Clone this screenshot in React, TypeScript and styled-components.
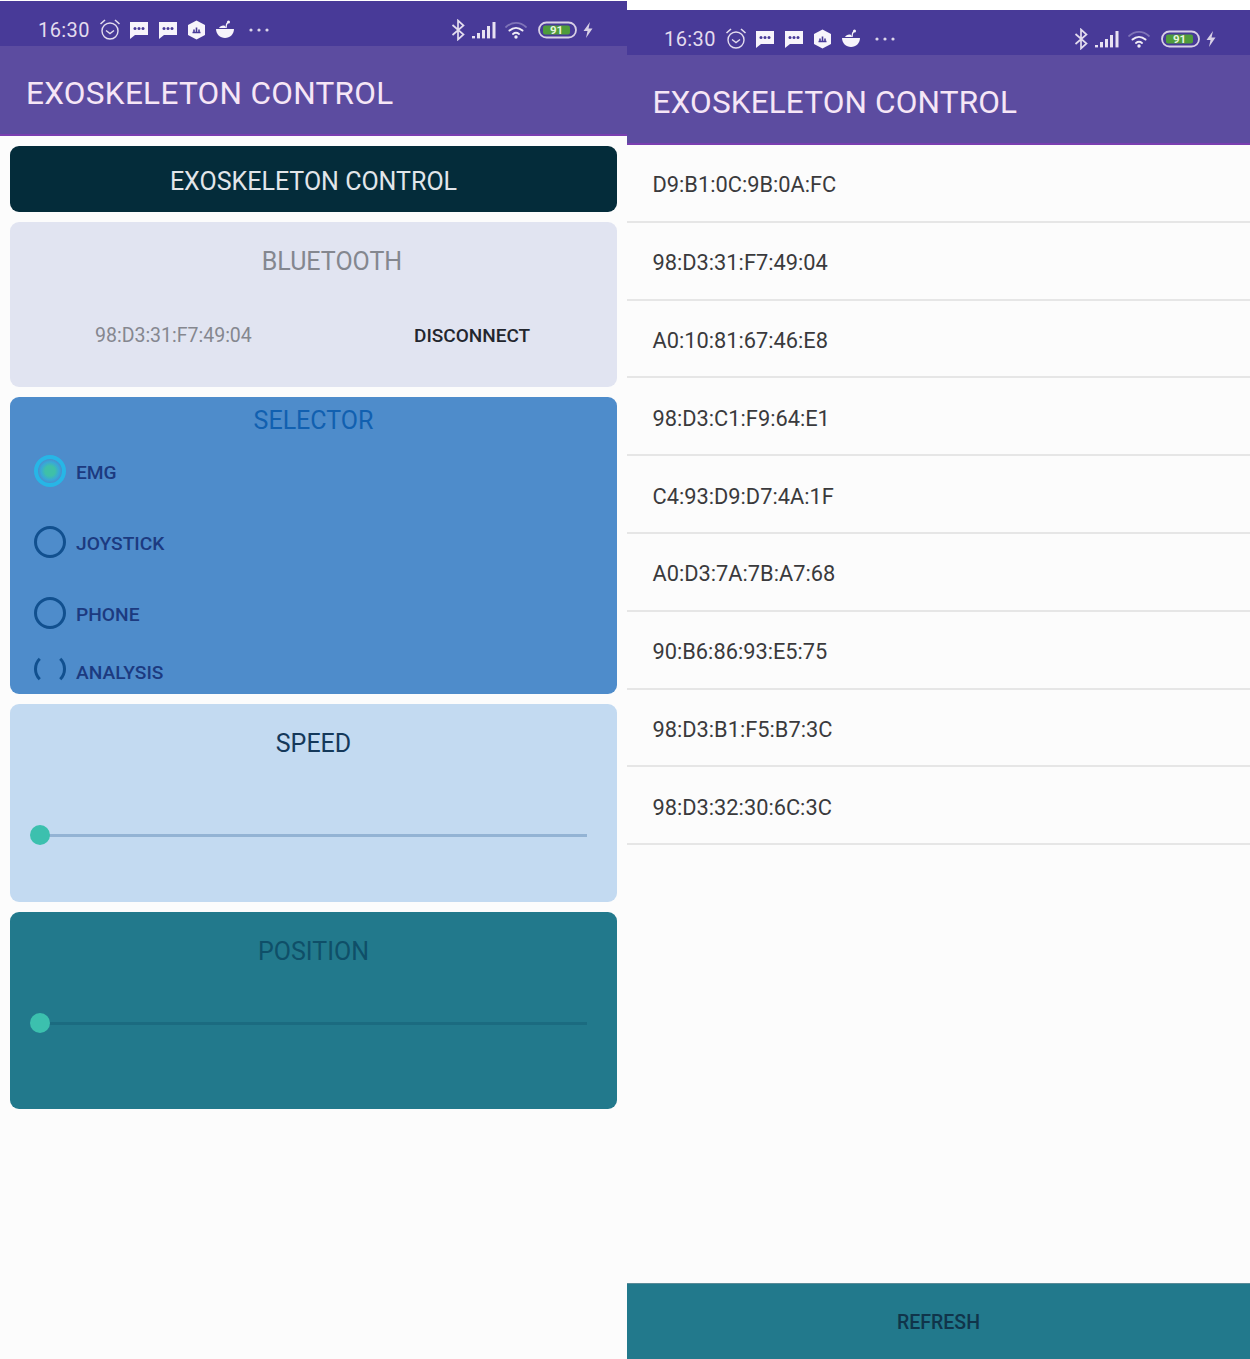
import React from "react";
import styled, { createGlobalStyle } from "styled-components";

const Global = createGlobalStyle`
  html, body { margin: 0; padding: 0; background: #fcfcfc; }
  body { font-family: Roboto, "Liberation Sans", sans-serif; }
`;

const Page = styled.div`
  width: 1250px;
  height: 1359px;
  display: grid;
  grid-template-columns: 627px 623px;
  overflow: hidden;
  background: #fff;
`;

const Phone = styled.div<{ $top: number }>`
  margin-top: ${(p) => p.$top}px;
  display: flex;
  flex-direction: column;
  background: #fcfcfc;
  min-height: 0;
  height: ${(p) => 1359 - p.$top}px;
`;

const StatusBar = styled.div`
  height: 45px;
  flex: none;
  background: #483a98;
  display: flex;
  align-items: center;
  color: #e4dcf0;
  box-sizing: border-box;
  padding-top: 12px;
`;

const Time = styled.span<{ $lead: number }>`
  font-size: 20px;
  letter-spacing: 0.4px;
  color: #e3dcee;
  margin-left: ${(p) => p.$lead}px;
  width: 60px;
`;

const IconSlot = styled.span<{ $gap?: number }>`
  display: inline-flex;
  margin-left: ${(p) => p.$gap ?? 0}px;
`;

const Spacer = styled.span`
  flex: 1;
`;

const TailGap = styled.span<{ $w: number }>`
  width: ${(p) => p.$w}px;
  flex: none;
`;

const Toolbar = styled.header<{ $left: number; $track: number }>`
  height: 90px;
  flex: none;
  box-sizing: border-box;
  background: #5c4ca0;
  border-bottom: 2px solid #7a3fb0;
  padding: 7px 0 0 ${(p) => p.$left}px;
  display: flex;
  align-items: center;
  color: #f6e6f6;
  font-size: 31.5px;
  font-weight: 400;
  letter-spacing: ${(p) => p.$track}px;
`;

const Stack = styled.main`
  display: flex;
  flex-direction: column;
  gap: 10px;
  padding: 10px 10px 0;
`;

const Card = styled.section<{ $bg: string; $h: number }>`
  background: ${(p) => p.$bg};
  height: ${(p) => p.$h}px;
  box-sizing: border-box;
  border-radius: 9px;
  position: relative;
  display: flex;
  flex-direction: column;
`;

const HeaderCard = styled(Card)`
  align-items: center;
  justify-content: center;
  color: #e2e6ea;
  font-size: 25px;
  padding-top: 4px;
`;

const CardTitle = styled.div<{ $color: string; $top: number; $shift?: number }>`
  text-align: center;
  color: ${(p) => p.$color};
  font-size: 25px;
  line-height: 30px;
  padding-top: ${(p) => p.$top}px;
  padding-left: ${(p) => p.$shift ?? 0}px;
`;

const BtRow = styled.div`
  display: flex;
  align-items: center;
  margin-top: 43px;
  padding-left: 85px;
  height: 30px;
`;

const Address = styled.span`
  color: #85878f;
  font-size: 19.5px;
  width: 319px;
`;

const Disconnect = styled.span`
  color: #23262e;
  font-size: 19px;
  font-weight: 500;
`;

const RadioGroup = styled.div`
  position: relative;
  flex: 1;
  display: flex;
  flex-direction: column;
  padding: 0 0 0 24px;
`;

const RadioRow = styled.div<{ $h: number }>`
  height: ${(p) => p.$h}px;
  display: flex;
  align-items: center;
  gap: 10px;
  flex: none;
`;

const RadioMark = styled.span<{ $on?: boolean }>`
  width: 32px;
  height: 32px;
  box-sizing: border-box;
  border-radius: 50%;
  flex: none;
  position: relative;
  top: -1px;
  border: ${(p) => (p.$on ? "4px solid #27b6e6" : "3px solid #11508f")};
  background: ${(p) => (p.$on ? "radial-gradient(circle, #3fc0a8 0 5px, #38a8d8 9px, #4a8fcc 12px)" : "transparent")};
`;

const ClippedMark = styled(RadioMark)`
  border-top-color: transparent;
  border-bottom-color: transparent;
  margin-top: -5px;
`;

const RadioLabel = styled.span`
  color: #1c3a80;
  font-size: 19.2px;
  font-weight: 500;
  padding-top: 1px;
`;

const SliderArea = styled.div<{ $top: number; $line: string }>`
  position: relative;
  margin: ${(p) => p.$top}px 30px 0 30px;
  height: 20px;
  display: flex;
  align-items: center;
  &::before {
    content: "";
    flex: 1;
    height: 3px;
    background: ${(p) => p.$line};
  }
`;

const Thumb = styled.span`
  position: absolute;
  left: -10px;
  top: 0;
  width: 20px;
  height: 20px;
  border-radius: 50%;
  background: #3cc0ae;
`;

const DeviceList = styled.ul`
  list-style: none;
  margin: 0;
  padding: 0;
  flex: none;
`;

const Device = styled.li`
  height: 77.8px;
  box-sizing: border-box;
  border-bottom: 2px solid #e6e6e6;
  display: flex;
  align-items: center;
  padding: 4px 0 0 25.5px;
  color: #3a3a3c;
  font-size: 21.8px;
`;

const Refresh = styled.button`
  margin-top: auto;
  height: 76px;
  flex: none;
  border: 0;
  border-top: 1px solid #5a8b98;
  background: #22798c;
  color: #10344a;
  font-family: inherit;
  font-size: 19.5px;
  font-weight: 500;
  padding: 1px 0 0;
`;

const Alarm = () => (
  <svg width="22" height="24" viewBox="0 0 22 24" fill="none" stroke="#e3dcee" strokeWidth="1.4">
    <circle cx="11" cy="13" r="8" />
    <path d="M7 12.5l4 3 4-3" />
    <path d="M1.5 6L6 2M20.5 6L16 2" strokeWidth="1.6" />
  </svg>
);

const Bubble = () => (
  <svg width="20" height="20" viewBox="0 0 20 20">
    <path d="M1 2h18v13H6l-5 4z" fill="#f7f4fb" />
    <circle cx="6" cy="8.5" r="1.5" fill="#483a98" />
    <circle cx="10" cy="8.5" r="1.5" fill="#483a98" />
    <circle cx="14" cy="8.5" r="1.5" fill="#483a98" />
  </svg>
);

const Hex = () => (
  <svg width="19" height="20" viewBox="0 0 19 20">
    <path d="M9.5 0.5l8.5 4.5v10l-8.5 4.5L1 15V5z" fill="#f7f4fb" />
    <path d="M5.5 12.5h8M7 12V9.5M9.5 12V7.5M12 12V9.5" stroke="#483a98" strokeWidth="1.6" />
  </svg>
);

const Bowl = () => (
  <svg width="20" height="20" viewBox="0 0 20 20">
    <path d="M1 9h18c0 5-4 9-9 9S1 14 1 9z" fill="#f7f4fb" />
    <path d="M11 8c0-3 1-5 2-6" stroke="#f7f4fb" strokeWidth="1.4" fill="none" />
    <circle cx="13.5" cy="2" r="1.5" fill="#f7f4fb" />
    <path d="M4 8c1-2 4-3 6-2l1 2z" fill="#f7f4fb" />
  </svg>
);

const Dots = () => (
  <svg width="22" height="6" viewBox="0 0 22 6" fill="#dcd6ea">
    <circle cx="3" cy="3" r="1.6" />
    <circle cx="11" cy="3" r="1.6" />
    <circle cx="19" cy="3" r="1.6" />
  </svg>
);

const Bluetooth = () => (
  <svg width="14" height="22" viewBox="0 0 14 22" fill="none" stroke="#e3dcee" strokeWidth="1.7">
    <path d="M1.5 6l11 9.5L7 20.5V1.5l5.5 5L1.5 16" />
  </svg>
);

const Signal = () => (
  <svg width="26" height="18" viewBox="0 0 26 18" fill="#e8e2f2">
    <rect x="1" y="15" width="3" height="2.4" />
    <rect x="6" y="12" width="3" height="5.4" />
    <rect x="11" y="9" width="3" height="8.4" />
    <rect x="16" y="5" width="3" height="12.4" />
    <rect x="21.5" y="1" width="3" height="16.4" />
  </svg>
);

const Wifi = () => (
  <svg width="24" height="18" viewBox="0 0 24 18" fill="none" strokeLinecap="round">
    <path d="M2 6c6-5.5 14-5.5 20 0" stroke="#7f74b8" strokeWidth="1.7" />
    <path d="M5.5 9.5c4-3.5 9-3.5 13 0" stroke="#f0ecf6" strokeWidth="2" />
    <path d="M9 13c2-1.6 4-1.6 6 0" stroke="#f0ecf6" strokeWidth="2" />
    <circle cx="12" cy="16" r="1.7" fill="#f0ecf6" />
  </svg>
);

const Battery = () => (
  <svg width="40" height="18" viewBox="0 0 40 18">
    <rect x="1" y="1.5" width="37" height="15" rx="7.5" fill="none" stroke="#d8d0e6" strokeWidth="1.8" />
    <rect x="5" y="4.5" width="27" height="9" rx="2" fill="#4f9c3c" />
    <text x="18.5" y="13" fontSize="11.5" fontWeight="700" textAnchor="middle" fill="#e8f4df" fontFamily="Roboto">91</text>
  </svg>
);

const Bolt = () => (
  <svg width="12" height="18" viewBox="0 0 12 18" fill="#d8d0e6">
    <path d="M8 1L1.5 10H5.5L4 17l6.5-9.5H6.5z" />
  </svg>
);

const Status = ({ lead, tail }: { lead: number; tail: number }) => (
  <StatusBar>
    <Time $lead={lead}>16:30</Time>
    <IconSlot $gap={1}><Alarm /></IconSlot>
    <IconSlot $gap={8}><Bubble /></IconSlot>
    <IconSlot $gap={9}><Bubble /></IconSlot>
    <IconSlot $gap={9}><Hex /></IconSlot>
    <IconSlot $gap={9}><Bowl /></IconSlot>
    <IconSlot $gap={13}><Dots /></IconSlot>
    <Spacer />
    <IconSlot><Bluetooth /></IconSlot>
    <IconSlot $gap={6}><Signal /></IconSlot>
    <IconSlot $gap={7}><Wifi /></IconSlot>
    <IconSlot $gap={10}><Battery /></IconSlot>
    <IconSlot $gap={4}><Bolt /></IconSlot>
    <TailGap $w={tail} />
  </StatusBar>
);

const devices = [
  "D9:B1:0C:9B:0A:FC",
  "98:D3:31:F7:49:04",
  "A0:10:81:67:46:E8",
  "98:D3:C1:F9:64:E1",
  "C4:93:D9:D7:4A:1F",
  "A0:D3:7A:7B:A7:68",
  "90:B6:86:93:E5:75",
  "98:D3:B1:F5:B7:3C",
  "98:D3:32:30:6C:3C",
];

export default function App() {
  return (
    <Page>
      <Global />
      <Phone $top={1}>
        <Status lead={38} tail={33} />
        <Toolbar $left={26} $track={0.3}>EXOSKELETON CONTROL</Toolbar>
        <Stack>
          <HeaderCard $bg="#042c3a" $h={66}>EXOSKELETON CONTROL</HeaderCard>
          <Card $bg="#e1e4f1" $h={165}>
            <CardTitle $color="#84878f" $top={25} $shift={37}>BLUETOOTH</CardTitle>
            <BtRow>
              <Address>98:D3:31:F7:49:04</Address>
              <Disconnect>DISCONNECT</Disconnect>
            </BtRow>
          </Card>
          <Card $bg="#4e8ccb" $h={297}>
            <CardTitle $color="#1160b0" $top={9}>SELECTOR</CardTitle>
            <RadioGroup>
              <RadioRow $h={71}><RadioMark $on /><RadioLabel>EMG</RadioLabel></RadioRow>
              <RadioRow $h={71}><RadioMark /><RadioLabel>JOYSTICK</RadioLabel></RadioRow>
              <RadioRow $h={71}><RadioMark /><RadioLabel>PHONE</RadioLabel></RadioRow>
              <RadioRow $h={46}><ClippedMark /><RadioLabel>ANALYSIS</RadioLabel></RadioRow>
            </RadioGroup>
          </Card>
          <Card $bg="#c3daf1" $h={198}>
            <CardTitle $color="#14385a" $top={25}>SPEED</CardTitle>
            <SliderArea $top={66} $line="#93b3d4"><Thumb /></SliderArea>
          </Card>
          <Card $bg="#22798c" $h={197}>
            <CardTitle $color="#0f4f68" $top={25}>POSITION</CardTitle>
            <SliderArea $top={46} $line="#1b6b80"><Thumb /></SliderArea>
          </Card>
        </Stack>
      </Phone>
      <Phone $top={10}>
        <Status lead={37} tail={33} />
        <Toolbar $left={25.5} $track={0.15}>EXOSKELETON CONTROL</Toolbar>
        <DeviceList>
          {devices.map((d) => (
            <Device key={d}>{d}</Device>
          ))}
        </DeviceList>
        <Refresh>REFRESH</Refresh>
      </Phone>
    </Page>
  );
}
